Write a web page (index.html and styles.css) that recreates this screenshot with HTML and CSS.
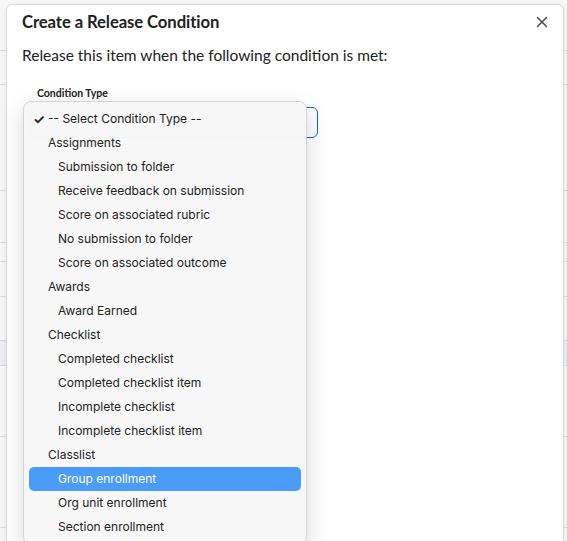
FILE: index.html
```html
<!DOCTYPE html>
<html lang="en">
<head>
    <meta charset="UTF-8">
    <meta name="viewport" content="width=device-width, initial-scale=1.0">
    <title>Create a Release Condition</title>
    <link rel="stylesheet" href="styles.css">
</head>
<body>
    <!-- faded page behind the dialog -->
    <div class="backdrop">
        <div class="bg-row" style="height: 50px"></div>
        <div class="bg-row" style="height: 33px"></div>
        <div class="bg-row" style="height: 105px"></div>
        <div class="bg-row" style="height: 51px"></div>
        <div class="bg-row" style="height: 18px"></div>
        <div class="bg-row" style="height: 34px"></div>
        <div class="bg-row" style="height: 43px"></div>
        <div class="bg-row shaded" style="height: 24px"></div>
        <div class="bg-row" style="height: 70px"></div>
        <div class="bg-row" style="height: 90px"></div>
    </div>

    <div class="dialog">
        <div class="dialog-header">
            <h1>Create a Release Condition</h1>
            <button class="close" aria-label="Close">
                <svg width="12" height="12" viewBox="0 0 12 12">
                    <path d="M1.5 1.5 L10.5 10.5 M10.5 1.5 L1.5 10.5" stroke="#494c4e" stroke-width="1.5" stroke-linecap="round"/>
                </svg>
            </button>
        </div>
        <p class="intro">Release this item when the following condition is met:</p>

        <div class="field">
            <label>Condition Type</label>
            <div class="select-box"></div>
        </div>
    </div>

    <!-- native select popup -->
    <ul class="menu">
        <li class="opt checked"><span class="check">✓</span>-- Select Condition Type --</li>
        <li class="group">Assignments</li>
        <li class="opt">Submission to folder</li>
        <li class="opt">Receive feedback on submission</li>
        <li class="opt">Score on associated rubric</li>
        <li class="opt">No submission to folder</li>
        <li class="opt">Score on associated outcome</li>
        <li class="group">Awards</li>
        <li class="opt">Award Earned</li>
        <li class="group">Checklist</li>
        <li class="opt">Completed checklist</li>
        <li class="opt">Completed checklist item</li>
        <li class="opt">Incomplete checklist</li>
        <li class="opt">Incomplete checklist item</li>
        <li class="group">Classlist</li>
        <li class="opt active">Group enrollment</li>
        <li class="opt">Org unit enrollment</li>
        <li class="opt">Section enrollment</li>
    </ul>
</body>
</html>
```

FILE: styles.css
```css
html, body {
    margin: 0;
    padding: 0;
}
body {
    width: 567px;
    height: 541px;
    overflow: hidden;
    position: relative;
    background: #f7f7f8;
    font-family: Lato, "Noto Sans", sans-serif;
    color: #202122;
}
.backdrop {
    display: flex;
    flex-direction: column;
}
.bg-row {
    border-bottom: 1px solid #dcdcdc;
}
.bg-row.shaded {
    background: #eceef1;
}

.dialog {
    position: absolute;
    left: 6px;
    top: 4px;
    width: 556px;
    height: 560px;
    background: #fff;
    border: 1px solid #d8d8d8;
    border-radius: 6px;
    box-shadow: 0 2px 10px rgba(0, 0, 0, 0.06);
}
.dialog-header {
    display: flex;
    align-items: center;
    justify-content: space-between;
    padding: 5px 14px 0 15px;
    height: 24px;
}
.dialog-header h1 {
    margin: 0;
    font-size: 16.7px;
    font-weight: 700;
    letter-spacing: -0.1px;
}
.close {
    border: none;
    background: none;
    padding: 0;
    width: 14px;
    height: 14px;
    display: flex;
    align-items: center;
    justify-content: center;
}
.intro {
    margin: 10px 0 0 15px;
    font-size: 15.5px;
    line-height: 22px;
}
.field {
    margin: 20px 0 0 23px;
}
.field label {
    display: block;
    margin-left: 7px;
    font-size: 10.5px;
    font-weight: 700;
    line-height: 14px;
}
.select-box {
    margin-top: 7px;
    width: 286px;
    height: 29px;
    border: 1.5px solid #006fbf;
    border-radius: 6px;
}

.menu {
    position: absolute;
    left: 23px;
    top: 101px;
    width: 272px;
    margin: 0;
    padding: 5px;
    list-style: none;
    background: rgba(247, 247, 247, 0.98);
    border: 1px solid #d4d4d4;
    border-radius: 8px;
    box-shadow: 0 8px 22px rgba(0, 0, 0, 0.16);
    font-family: Inter, "Noto Sans", sans-serif;
    font-size: 12px;
    color: #222;
}
.menu li {
    height: 24px;
    line-height: 24px;
    border-radius: 5px;
    white-space: nowrap;
    overflow: hidden;
}
.menu .group {
    padding-left: 19px;
}
.menu .opt {
    padding-left: 29px;
}
.menu .checked {
    padding-left: 4px;
}
.check {
    display: inline-block;
    width: 15px;
    height: 24px;
    line-height: 24px;
    vertical-align: top;
    font-size: 13.5px;
    font-weight: 700;
}
.menu .active {
    background: #4a9cf7;
    color: #fff;
}
```
